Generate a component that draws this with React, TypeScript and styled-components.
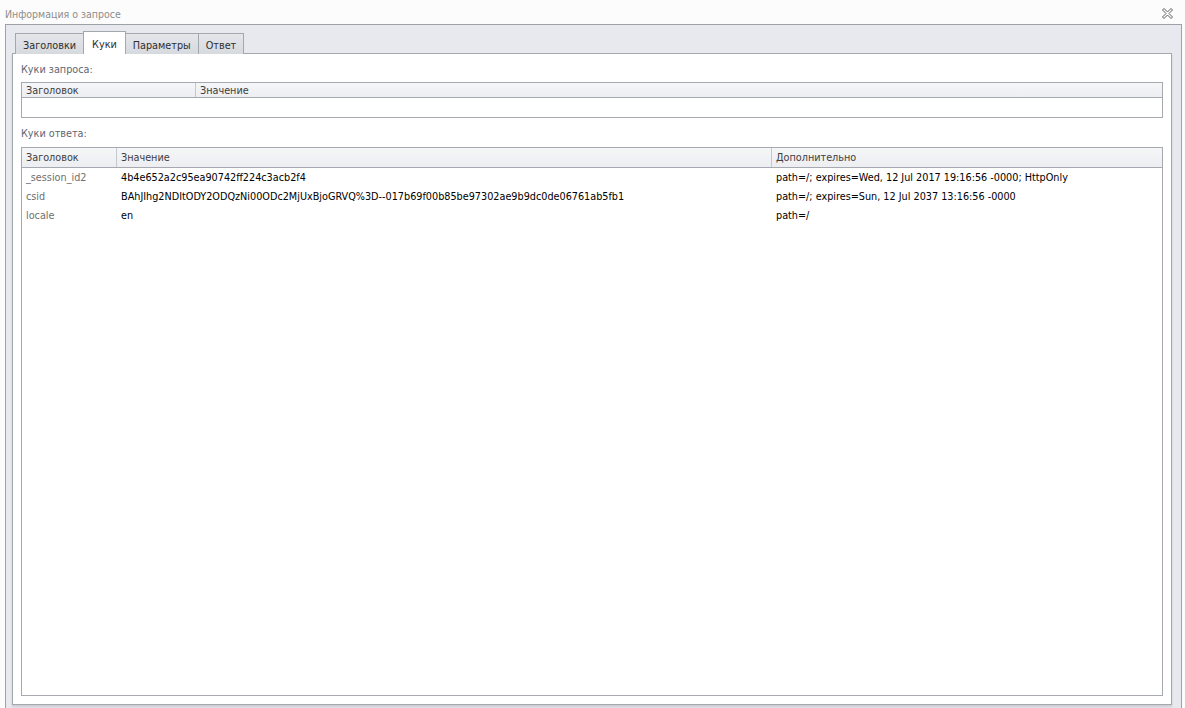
import React from "react";
import styled, { createGlobalStyle } from "styled-components";

const GlobalStyle = createGlobalStyle`
  html, body { margin: 0; padding: 0; }
  body {
    background: #fcfcfc;
    font-family: "DejaVu Sans Condensed", "DejaVu Sans", sans-serif;
    font-size: 10.75px;
  }
  * { box-sizing: border-box; }
`;

const Window = styled.div`
  width: 1185px;
  height: 708px;
  display: flex;
  flex-direction: column;
  overflow: hidden;
  background: #fcfcfc;
`;

const TitleBar = styled.div`
  height: 24px;
  flex: none;
  display: flex;
  align-items: center;
  justify-content: space-between;
  padding: 3px 12px 0 5px;
  color: #8d8d8d;
  font-size: 10.5px;
`;

const CloseButton = styled.button`
  border: none;
  background: none;
  padding: 0;
  width: 11px;
  height: 11px;
  display: flex;
  cursor: pointer;
`;

const Frame = styled.div`
  flex: 1;
  min-height: 0;
  margin: 0 3px 0 5px;
  border: 1px solid #9da2aa;
  border-bottom: none;
  background: #e7e9ee;
  padding: 6px 9px 3px 6px;
  display: flex;
  flex-direction: column;
`;

const TabStrip = styled.div`
  display: flex;
  align-items: flex-end;
  height: 23px;
  margin-left: 3px;
  flex: none;
`;

const Tab = styled.div<{ $active?: boolean }>`
  position: relative;
  height: ${(p) => (p.$active ? "23px" : "21px")};
  padding: ${(p) => (p.$active ? "3px 8px 0" : "2px 7px 0")};
  margin-left: -1px;
  display: flex;
  align-items: center;
  border: 1px solid #a3a7ae;
  border-bottom: none;
  color: #2e2e2e;
  background: ${(p) =>
    p.$active ? "#ffffff" : "linear-gradient(#e4e6ea, #d6d9de)"};
  z-index: ${(p) => (p.$active ? 2 : 0)};
  &:first-child { margin-left: 0; }
`;

const Panel = styled.div`
  flex: 1;
  min-height: 0;
  margin-top: -1px;
  background: #ffffff;
  border: 1px solid #a3a7ae;
  box-shadow: 0 2px 2px rgba(0, 0, 0, 0.12);
  padding: 0 8px 8px 8px;
  display: flex;
  flex-direction: column;
`;

const SectionLabel = styled.div<{ $h: number }>`
  flex: none;
  padding: 9px 0 0 0;
  height: ${(p) => p.$h}px;
  line-height: 14px;
  color: #606672;
`;

const Grid = styled.div<{ $grow?: boolean }>`
  flex: ${(p) => (p.$grow ? "1" : "none")};
  min-height: 0;
  border: 1px solid #a6aab0;
  display: flex;
  flex-direction: column;
`;

const HeaderRow = styled.div<{ $cols: string; $h: number }>`
  display: grid;
  grid-template-columns: ${(p) => p.$cols};
  height: ${(p) => p.$h}px;
  background: linear-gradient(#f5f6f8, #eceef1);
  border-bottom: 1px solid #a6aab0;
  flex: none;
`;

const HeaderCell = styled.div`
  padding-left: 4px;
  display: flex;
  align-items: center;
  color: #3d3d3d;
  border-right: 1px solid #c4c7cc;
  &:last-child { border-right: none; }
`;

const Body = styled.div<{ $minH?: number }>`
  min-height: ${(p) => p.$minH ?? 0}px;
  flex: 1;
`;

const Row = styled.div<{ $cols: string }>`
  display: grid;
  grid-template-columns: ${(p) => p.$cols};
  height: 19px;
  align-items: center;
`;

const Cell = styled.div<{ $muted?: boolean }>`
  padding-left: 4px;
  line-height: 17px;
  color: ${(p) => (p.$muted ? "#707070" : "#000000")};
  white-space: nowrap;
  overflow: hidden;
`;

const responseCols = "95px 655px 1fr";
const requestCols = "174px 1fr";

const cookies = [
  {
    name: "_session_id2",
    value: "4b4e652a2c95ea90742ff224c3acb2f4",
    extra: "path=/; expires=Wed, 12 Jul 2017 19:16:56 -0000; HttpOnly",
  },
  {
    name: "csid",
    value:
      "BAhJIhg2NDItODY2ODQzNi00ODc2MjUxBjoGRVQ%3D--017b69f00b85be97302ae9b9dc0de06761ab5fb1",
    extra: "path=/; expires=Sun, 12 Jul 2037 13:16:56 -0000",
  },
  { name: "locale", value: "en", extra: "path=/" },
];

const CloseIcon = () => (
  <svg width="11" height="11" viewBox="0 0 11 11">
    <polygon
      points="0.5,2 2,0.5 5.5,4 9,0.5 10.5,2 7,5.5 10.5,9 9,10.5 5.5,7 2,10.5 0.5,9 4,5.5"
      fill="none"
      stroke="#5f5f5f"
      strokeWidth="1"
    />
  </svg>
);

export default function App() {
  return (
    <Window>
      <GlobalStyle />
      <TitleBar>
        <span>Информация о запросе</span>
        <CloseButton aria-label="Закрыть">
          <CloseIcon />
        </CloseButton>
      </TitleBar>
      <Frame>
        <TabStrip>
          <Tab>Заголовки</Tab>
          <Tab $active>Куки</Tab>
          <Tab>Параметры</Tab>
          <Tab>Ответ</Tab>
        </TabStrip>
        <Panel>
          <SectionLabel $h={28}>Куки запроса:</SectionLabel>
          <Grid>
            <HeaderRow $cols={requestCols} $h={15}>
              <HeaderCell>Заголовок</HeaderCell>
              <HeaderCell>Значение</HeaderCell>
            </HeaderRow>
            <Body $minH={19} />
          </Grid>
          <SectionLabel $h={29}>Куки ответа:</SectionLabel>
          <Grid $grow>
            <HeaderRow $cols={responseCols} $h={20}>
              <HeaderCell>Заголовок</HeaderCell>
              <HeaderCell>Значение</HeaderCell>
              <HeaderCell>Дополнительно</HeaderCell>
            </HeaderRow>
            <Body>
              {cookies.map((c) => (
                <Row key={c.name} $cols={responseCols}>
                  <Cell $muted>{c.name}</Cell>
                  <Cell>{c.value}</Cell>
                  <Cell>{c.extra}</Cell>
                </Row>
              ))}
            </Body>
          </Grid>
        </Panel>
      </Frame>
    </Window>
  );
}
